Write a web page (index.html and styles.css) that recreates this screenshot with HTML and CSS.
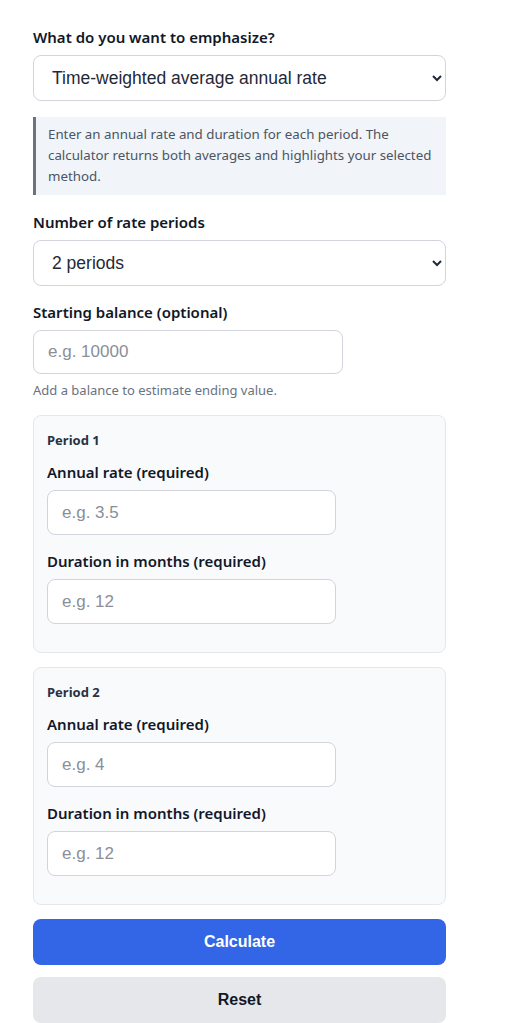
FILE: index.html
```html
<!DOCTYPE html>
<html lang="en">
<head>
  <meta charset="UTF-8" />
  <meta name="viewport" content="width=device-width, initial-scale=1.0"/>
  <title>Average Rate Calculator</title>
  <link rel="stylesheet" href="styles.css">
</head>
<body>
  <form class="calc" onsubmit="return false">
    <div class="field">
      <label class="label" for="emphasis">What do you want to emphasize?</label>
      <select id="emphasis" class="control">
        <option>Time-weighted average annual rate</option>
        <option>Simple average annual rate</option>
      </select>
    </div>

    <div class="note">
      Enter an annual rate and duration for each period. The calculator returns both averages and highlights your selected method.
    </div>

    <div class="field">
      <label class="label" for="count">Number of rate periods</label>
      <select id="count" class="control">
        <option>2 periods</option>
        <option>3 periods</option>
        <option>4 periods</option>
      </select>
    </div>

    <div class="field">
      <label class="label" for="balance">Starting balance (optional)</label>
      <input id="balance" class="control short" type="text" placeholder="e.g. 10000">
      <div class="help">Add a balance to estimate ending value.</div>
    </div>

    <div class="period">
      <div class="period-title">Period 1</div>
      <div class="field">
        <label class="label" for="rate1">Annual rate (required)</label>
        <input id="rate1" class="control short" type="text" placeholder="e.g. 3.5">
      </div>
      <div class="field">
        <label class="label" for="months1">Duration in months (required)</label>
        <input id="months1" class="control short" type="text" placeholder="e.g. 12">
      </div>
    </div>

    <div class="period">
      <div class="period-title">Period 2</div>
      <div class="field">
        <label class="label" for="rate2">Annual rate (required)</label>
        <input id="rate2" class="control short" type="text" placeholder="e.g. 4">
      </div>
      <div class="field">
        <label class="label" for="months2">Duration in months (required)</label>
        <input id="months2" class="control short" type="text" placeholder="e.g. 12">
      </div>
    </div>

    <button class="btn primary" type="submit">Calculate</button>
    <button class="btn secondary" type="reset">Reset</button>
  </form>
</body>
</html>
```

FILE: styles.css
```css
body {
  font-family: "Noto Sans", sans-serif;
  margin: 0;
  background: white;
  color: #1f2937;
}
.calc {
  width: 413px;
  margin: 0 0 0 33px;
  padding-top: 27px;
  display: flex;
  flex-direction: column;
}
.field {
  display: flex;
  flex-direction: column;
  margin-bottom: 16px;
}
.label {
  font-size: 15px;
  font-weight: 600;
  line-height: 20px;
  margin-bottom: 8px;
  color: #111827;
}
.control {
  font-family: "Liberation Sans", Arial, sans-serif;
  font-size: 17px;
  color: #1f2937;
  height: 44px;
  box-sizing: border-box;
  padding: 0 14px;
  border: 1px solid #d1d5db;
  border-radius: 8px;
  background: white;
  outline: none;
}
select.control {
  font-size: 17.5px;
  height: 46px;
}
.control::placeholder {
  color: #8a8f98;
}
.short {
  width: 310px;
}
.note {
  background: #f1f4f8;
  border-left: 3px solid #6b7280;
  padding: 7px 12px 8px 12px;
  font-size: 13.3px;
  line-height: 21px;
  color: #4b5563;
  margin: 0 0 17px 0;
}
.help {
  font-size: 13px;
  color: #6b7280;
  margin-top: 7px;
}
.period {
  background: #f9fafc;
  border: 1px solid #e5e7eb;
  border-radius: 8px;
  padding: 15px 13px 12px 13px;
  margin-bottom: 14px;
}
.period .short {
  width: 289px;
  height: 45px;
}
.period-title {
  font-size: 13px;
  font-weight: 700;
  color: #273244;
  margin-bottom: 13px;
}
.btn {
  font-family: "Liberation Sans", Arial, sans-serif;
  font-size: 16px;
  font-weight: bold;
  height: 46px;
  border: none;
  border-radius: 8px;
  cursor: pointer;
}
.primary {
  background: #3366e6;
  color: white;
  margin-bottom: 12px;
}
.secondary {
  background: #e5e7eb;
  color: #111827;
}
```
